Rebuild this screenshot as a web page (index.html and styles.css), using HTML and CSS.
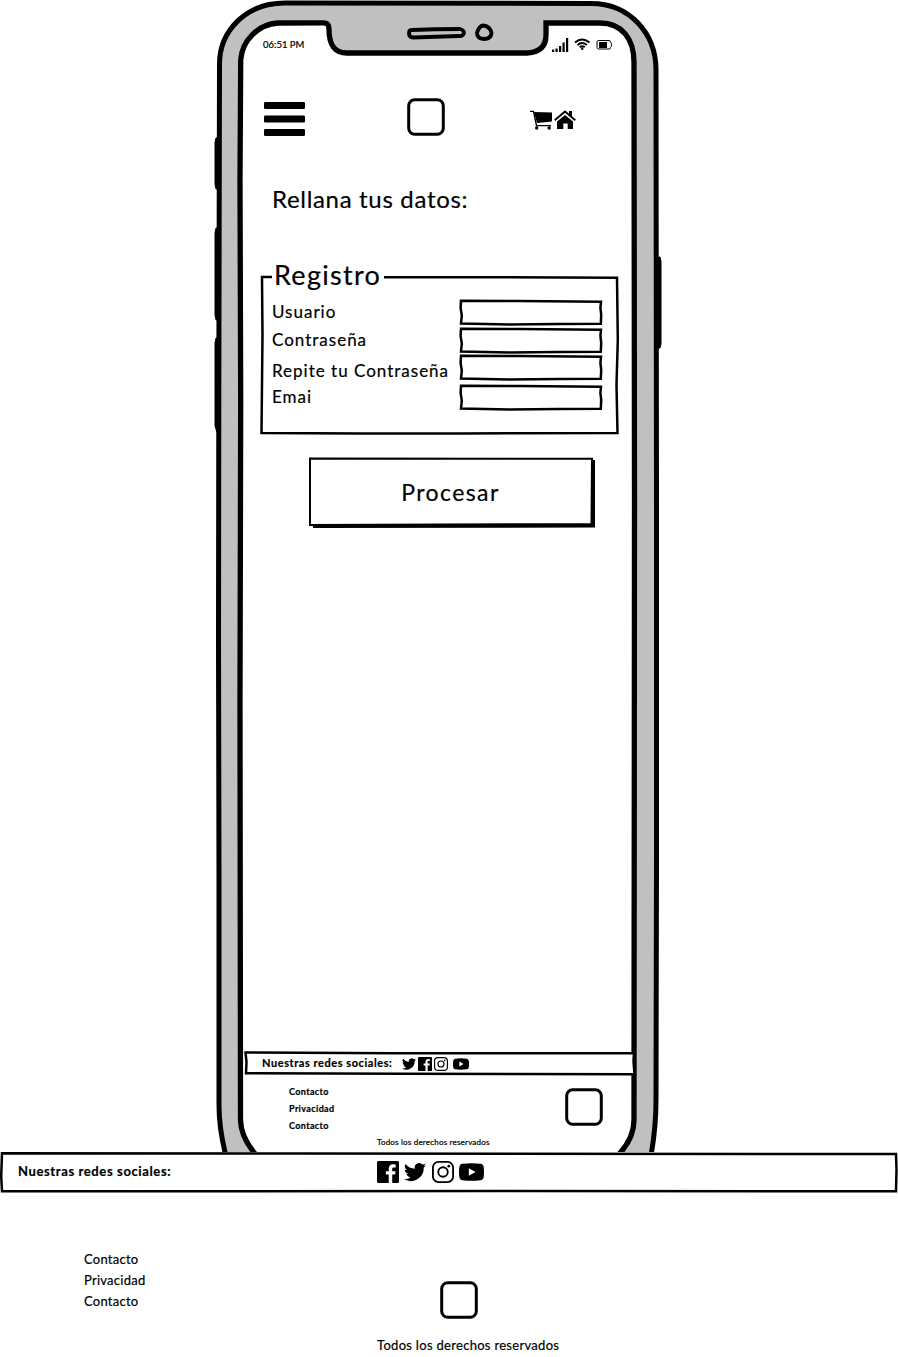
FILE: index.html
```
<!DOCTYPE html>
<html lang="es">
<head>
<meta charset="utf-8">
<title>Registro</title>
<link rel="stylesheet" href="styles.css">
</head>
<body>
<svg class="defs" aria-hidden="true">
  <symbol id="twitter" viewBox="0 0 24 24"><path d="M24 4.600a10 10 0 0 1-2.800.8 5 5 0 0 0 2.100-2.700 10 10 0 0 1-3.100 1.200 4.900 4.900 0 0 0-8.400 4.500A14 14 0 0 1 1.700 3.200a4.900 4.900 0 0 0 1.500 6.600 4.900 4.900 0 0 1-2.200-.6 4.900 4.900 0 0 0 3.900 4.900 5 5 0 0 1-2.200.1 4.900 4.900 0 0 0 4.600 3.400A9.900 9.900 0 0 1 0 19.600 14 14 0 0 0 21.500 7.100 10 10 0 0 0 24 4.600z"/></symbol>
  <symbol id="facebook" viewBox="0 0 24 24"><path fill-rule="evenodd" d="M1.500 0h21A1.500 1.500 0 0 1 24 1.500v21a1.500 1.500 0 0 1-1.500 1.500h-5.900v-9.300h3.100l.5-3.600h-3.600V8.800c0-1.100.3-1.800 1.800-1.800h1.900V3.700a25 25 0 0 0-2.800-.1c-2.800 0-4.700 1.700-4.700 4.800v2.700H9.700v3.600h3.100V24H1.500A1.500 1.500 0 0 1 0 22.500v-21A1.500 1.500 0 0 1 1.500 0z"/></symbol>
  <symbol id="instagram" viewBox="0 0 24 24"><g fill="none" stroke="#000" stroke-width="2"><rect x="1" y="1" width="22" height="22" rx="6"/><circle cx="12" cy="12" r="5.200"/></g><circle cx="18.300" cy="5.700" r="1.500"/></symbol>
  <symbol id="youtube" viewBox="0 0 28 20"><path fill-rule="evenodd" d="M4 .8Q14-.6 24 .8q3.200.4 3.600 3.600.8 5.600 0 11.200-.4 3.200-3.600 3.600-10 1.400-20 0Q.8 18.800.4 15.600-.4 10 .4 4.400.8 1.200 4 .8zM11 5.700v8.600l7.500-4.300z"/></symbol>
  <symbol id="box" viewBox="0 0 38 38"><rect x="1.700" y="1.700" width="34.600" height="34.600" rx="6" fill="none" stroke="#000" stroke-width="3"/></symbol>
  <symbol id="field" viewBox="0 0 144 27"><path d="M2 1.700 60 2l82 .8-.6 6 .8 7-.4 9L100 25l-50 .6L2 24.600l.8-8L1.600 9z" fill="#fff" stroke="#000" stroke-width="2.500"/></symbol>
</svg>

<main class="phone">
  <svg class="frame" viewBox="0 0 898 1152" aria-hidden="true">
    <path d="M219 138h-3l-1 4v42l1 5h3zM219 228h-3l-1 5v82l1 5h3zM219 338h-3l-1 5v83l2 6h2zM656 257h4l1 4v83l-1 4h-4z" stroke="#000"/>
    <path class="body" d="M230 1170Q219 1135 219 1105L219 880 218.500 640 218.800 400 219.500 65C219 32 245 3 285 3L590 3.500C630 3 656 34 656 70L656.500 500 656.500 860 656 1100Q656 1135 648 1170"/>
    <path class="glass" d="M272 1170Q241 1145 240.500 1120L240 700 240.700 400 240 180 240.700 60C242 40 259 24 278 23L323 22.800Q329 22.500 329 29C329 43 333 53 347 53L527 53Q546 52 546 35V23L600 23C622 23 634 39 634 62L634.500 500 634 1120Q634 1144 608 1164"/>
    <path d="M412 30Q435 29 460 29 464 30 464 33 463 36.500 459 36L413 37.500Q409 37.500 409 33 409 30 412 30zM483 25.500Q490 26 491.500 33 491 39 484 39 477 38.500 477 33 479 26 483 25.500z" class="sensor"/>
  </svg>

  <div class="screen">
    <div class="status">
      <span class="clock">06:51 PM</span>
      <svg class="signals" viewBox="0 0 60 16" aria-hidden="true">
        <path d="M0 12.500h2.200V15H0zM3.500 11.500h2.200V15H3.500zM7 9h2.200v6H7zM10.500 5.500h2.200V15h-2.200zM14 1h2.200v14H14z"/>
        <g fill="none" stroke="#000" stroke-width="1.900"><path d="M23 5.500Q30-.3 37.500 5.500M25.500 8q4.700-3.800 9.300 0M27.700 10.300q2.500-2 5 0"/></g><circle cx="30.200" cy="11.800" r="1.200"/>
        <path d="M46.500 3.500h10.500q1.500 0 1.500 1.700 1 .3 1 2.600t-1 2.600q0 1.600-1.500 1.600H46.500q-1.500 0-1.500-1.500V5q0-1.500 1.500-1.500z" fill="none" stroke="#000"/><path d="M47 5h8v6h-8z"/>
      </svg>
    </div>

    <header class="topbar">
      <svg class="menu" viewBox="0 0 41 34" aria-hidden="true"><rect width="41" height="7" rx="1.200"/><rect y="13.500" width="41" height="7" rx="1.200"/><rect y="27" width="41" height="7" rx="1.200"/></svg>
      <svg class="logo"><use href="#box"/></svg>
      <svg class="shop" viewBox="0 0 46 20" aria-hidden="true">
        <path d="M4 2 22 2.500v9L7 13z"/><path d="M0 1.400h3.500l3 14.200H21M6 13.500" fill="none" stroke="#000" stroke-width="1.400"/><circle cx="6.700" cy="18" r="1.700"/><circle cx="19.200" cy="18" r="1.700"/>
        <path d="M27 11.500 35 5l8 6.500V19h-5.300v-5.500h-4.400V19H27z"/><path d="m24.700 10.300 10.300-8.700 10.300 8.700" fill="none" stroke="#000" stroke-width="2"/><path d="M39 1h3v6l-3-2.500z"/>
      </svg>
    </header>

    <h1 class="title">Rellana tus datos:</h1>

    <form class="form">
      <svg class="sketch" viewBox="0 0 359 161" aria-hidden="true"><path d="M12 2H2L2.500 60 1.500 158 100 158.500 200 158.500 357.500 158 356.500 110 357.800 65 357 2.800 240 2.200H124"/></svg>
      <h2 class="legend">Registro</h2>
      <div class="rows">
        <label>Usuario</label><svg class="field"><use href="#field"/></svg>
        <label>Contraseña</label><svg class="field"><use href="#field"/></svg>
        <label class="repeat">Repite tu Contraseña</label><svg class="field"><use href="#field"/></svg>
        <label>Emai</label><svg class="field"><use href="#field"/></svg>
      </div>
    </form>

    <button class="submit" type="button">
      <svg class="sketch" viewBox="0 0 286 71" aria-hidden="true"><path class="shade" d="M281 3h5v67.500l-282 .5v-5h277z"/><path class="face" d="M1 1.500 283 1.800 282.500 67 1 68z"/></svg>
      <span>Procesar</span>
    </button>

    <footer class="app-footer">
      <div class="social small">
        <svg class="sketch" viewBox="0 0 392 25" aria-hidden="true"><path d="M1.500 1.500 150 2.200 390 2.200 389.500 10 390.500 23.200 160 22.800 2 22.200 2.500 11z"/></svg>
        <strong>Nuestras redes sociales:</strong>
        <div class="icons"><svg><use href="#twitter"/></svg><svg><use href="#facebook"/></svg><svg><use href="#instagram"/></svg><svg class="yt"><use href="#youtube"/></svg></div>
      </div>
      <div class="app-links">
        <ul><li>Contacto</li><li>Privacidad</li><li>Contacto</li></ul>
        <svg class="logo"><use href="#box"/></svg>
      </div>
      <p class="rights-small">Todos los derechos reservados</p>
    </footer>
  </div>
</main>

<footer class="site-footer">
  <div class="social large">
    <svg class="sketch" viewBox="0 0 898 41" aria-hidden="true"><path d="M2 1.300 300 1.500 896 2 896.500 18 896 39.300 500 39 2 39.300 1.200 24z"/></svg>
    <strong>Nuestras redes sociales:</strong>
    <div class="icons"><svg><use href="#facebook"/></svg><svg><use href="#twitter"/></svg><svg class="ig"><use href="#instagram"/></svg><svg class="yt"><use href="#youtube"/></svg></div>
  </div>
  <div class="site-info">
    <ul><li>Contacto</li><li>Privacidad</li><li>Contacto</li></ul>
    <div class="brand"><svg class="logo"><use href="#box"/></svg><p>Todos los derechos reservados</p></div>
  </div>
</footer>
</body>
</html>
```
FILE: styles.css
```
* { box-sizing: border-box; margin: 0; padding: 0; }
body { width: 898px; height: 1357px; overflow: hidden; background: #fff; color: #000; font-family: Lato, "Open Sans", sans-serif; -webkit-text-stroke: .2px #000; }
.defs { position: absolute; width: 0; height: 0; }
svg { display: block; flex: none; }
ul { list-style: none; }
strong, label, li, p, span, h1, h2 { white-space: nowrap; }

.phone { position: relative; height: 1152px; overflow: hidden; }
.frame { position: absolute; inset: 0; width: 898px; height: 1152px; }
.body { fill: #c0c0c0; stroke: #000; stroke-width: 5; }
.glass { fill: #fff; stroke: #000; stroke-width: 5.3; }
.sensor { fill: #c0c0c0; stroke: #000; stroke-width: 3.8; }
.screen { position: relative; display: flex; flex-direction: column; height: 1152px; width: 392px; margin-left: 244px; padding-top: 36px; }

.status { display: flex; justify-content: space-between; align-items: center; height: 18px; padding: 0 24px 0 19px; }
.clock { margin-top: -1px; font-size: 9.5px; letter-spacing: 0; }
.signals { width: 60px; height: 16px; }

.topbar { display: flex; align-items: center; height: 38px; margin-top: 44px; padding-left: 20px; }
.menu { width: 41px; height: 34px; margin-top: 4px; }
.logo { width: 38px; height: 38px; }
.topbar .logo { margin-left: 102px; }
.shop { width: 46px; height: 20px; margin: 6px 0 0 85px; }

.title { height: 32px; margin: 46px 0 0 28px; font-size: 24px; line-height: 33px; font-weight: 400; letter-spacing: .68px; }

.form { position: relative; width: 359px; height: 161px; margin: 61px 0 0 16px; }
.sketch { position: absolute; inset: 0; width: 100%; height: 100%; fill: none; stroke: #000; stroke-width: 2.5; }
.legend { position: relative; height: 34px; margin: 0 0 0 14px; top: -17px; font-size: 27px; line-height: 34px; font-weight: 400; letter-spacing: 1.3px; }
.rows { position: relative; display: grid; grid-template-columns: 187px 144px; grid-template-rows: 28px 27px 30px 27px; align-items: start; margin: -10px 0 0 12px; }
.rows label { height: 26px; font-size: 17px; line-height: 26px; letter-spacing: 1px; }
.rows .repeat { padding-top: 4px; }
.field { width: 144px; height: 27px; }

.submit { position: relative; display: flex; align-items: center; justify-content: center; width: 286px; height: 71px; margin: 21px 0 0 65px; padding: 0 3px 2px 0; border: 0; background: none; font: 400 23px/32px Lato, sans-serif; letter-spacing: 1.4px; color: #000; }
.submit span { position: relative; }
.submit .face { fill: #fff; stroke-width: 2; }
.submit .shade { fill: #000; stroke: none; }

.app-footer { margin-top: auto; height: 101px; }
.social { position: relative; display: flex; align-items: center; }
.social strong, .icons { position: relative; }
.icons { display: flex; align-items: center; }
.small { height: 25px; padding-left: 18px; }
.small .sketch { fill: #fff; }
.small strong { width: 140px; padding-bottom: 2px; font-size: 11px; line-height: 14px; letter-spacing: .56px; }
.small .icons { gap: 2px; padding-top: 1px; }
.small .icons svg { width: 14px; height: 14px; }
.small .icons .yt { width: 16px; height: 12px; margin-left: 3px; }
.app-links { display: flex; justify-content: space-between; margin-top: 7px; padding: 0 33px 0 45px; }
.app-links .logo { margin-top: 5px; }
.app-links ul { font-size: 9px; line-height: 17px; font-weight: 700; letter-spacing: .38px; }
.rights-small { margin: 0 0 0 133px; font-size: 8px; line-height: 16px; letter-spacing: .2px; }

.large { height: 41px; padding-left: 18px; }
.large .sketch { fill: #fff; }
.large strong { width: 359px; font-size: 13px; line-height: 18px; letter-spacing: .62px; padding-bottom: 3px; }
.large .icons { gap: 5px; padding-bottom: 1px; }
.large .icons svg { width: 22px; height: 22px; }
.large .icons .ig { margin-left: 1px; }
.large .icons .yt { width: 25px; height: 18px; }
.site-info { display: flex; align-items: flex-start; padding-left: 84px; }
.site-info ul { width: 293px; padding-top: 56px; font-size: 13px; line-height: 21px; letter-spacing: .25px; }
.brand { padding-top: 88px; }
.brand .logo { margin-left: 63px; }
.brand p { margin-top: 16px; font-size: 13px; line-height: 20px; letter-spacing: .3px; }
```
